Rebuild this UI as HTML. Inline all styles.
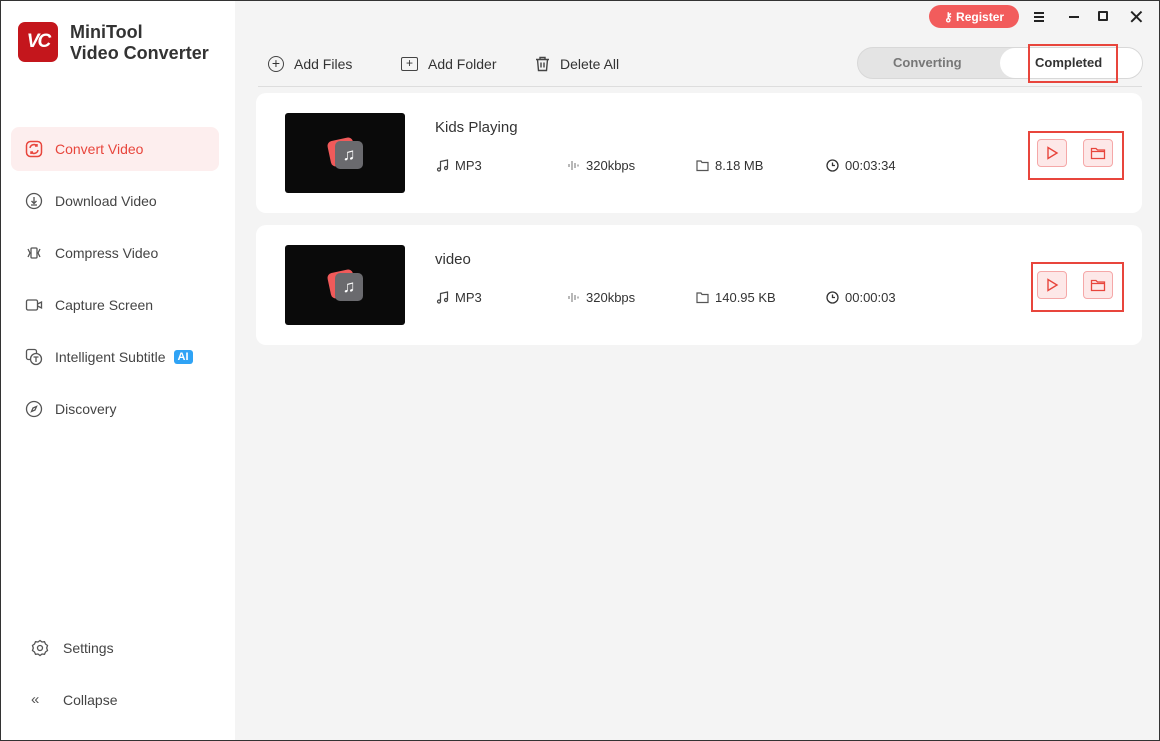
<!DOCTYPE html>
<html><head><style>
*{margin:0;padding:0;box-sizing:border-box}
body{width:1160px;height:741px;font-family:"Liberation Sans",sans-serif;background:#f4f4f4;position:relative;overflow:hidden;color:#333}
.frame{position:absolute;inset:0;border:1px solid #333;pointer-events:none;z-index:10}
.side{position:absolute;left:0;top:0;width:235px;height:741px;background:#fff}
.abs{position:absolute}
.nav{position:absolute;left:25px;font-size:14px;color:#444;display:flex;align-items:center;gap:12px}
.nav svg{width:18px;height:18px}
.card{position:absolute;left:256px;width:886px;height:120px;background:#fff;border-radius:10px}
.thumb{position:absolute;left:29px;top:20px;width:120px;height:80px;background:#0a0a0a;border-radius:3px}
.title{position:absolute;left:179px;top:26px;font-size:15px;color:#333}
.meta{position:absolute;top:65px;font-size:13px;color:#333;display:flex;align-items:center;gap:6px}
.meta svg{width:13px;height:13px}
.btn{position:absolute;width:30px;height:28px;border:1px solid #f5a8a8;background:#fde8e8;border-radius:4px;display:flex;align-items:center;justify-content:center}
.redbox{position:absolute;border:2px solid #e8453c}
.tb{position:absolute;top:56px;font-size:14px;color:#333;display:flex;align-items:center;gap:10px}
</style></head><body>
<div class="side">
  <div class="abs" style="left:18px;top:22px;width:40px;height:40px;border-radius:7px;background:#c4161c;color:#fff;font-weight:bold;font-size:19px;font-style:italic;display:flex;align-items:center;justify-content:center;letter-spacing:-2px">VC</div>
  <div class="abs" style="left:70px;top:22px;font-size:18px;font-weight:bold;line-height:21px;color:#333">MiniTool<br>Video Converter</div>
  <div class="abs" style="left:11px;top:127px;width:208px;height:44px;background:#fdeeee;border-radius:8px"></div>
  <div class="nav" style="top:140px;color:#e8453c"><svg viewBox="0 0 18 18" fill="none" stroke="#e8453c" stroke-width="1.5"><rect x="1.5" y="1.5" width="15" height="15" rx="4"/><path d="M5 8a4 4 0 0 1 7-2M13 10a4 4 0 0 1-7 2M12 4v2h-2M6 14v-2h2"/></svg>Convert Video</div>
  <div class="nav" style="top:192px"><svg viewBox="0 0 18 18" fill="none" stroke="#555" stroke-width="1.3"><circle cx="9" cy="9" r="7.5"/><path d="M9 5v6M6.5 9l2.5 2.5L11.5 9M6 13h6"/></svg>Download Video</div>
  <div class="nav" style="top:244px"><svg viewBox="0 0 18 18" fill="none" stroke="#555" stroke-width="1.3"><rect x="6" y="4" width="6" height="10" rx="1"/><path d="M3 5l2 4-2 4M15 5l-2 4 2 4"/></svg>Compress Video</div>
  <div class="nav" style="top:296px"><svg viewBox="0 0 18 18" fill="none" stroke="#555" stroke-width="1.3"><rect x="1.5" y="4" width="11" height="10" rx="1.5"/><path d="M12.5 8l4-2v6l-4-2"/></svg>Capture Screen</div>
  <div class="nav" style="top:348px"><svg viewBox="0 0 18 18" fill="none" stroke="#555" stroke-width="1.3"><rect x="1.5" y="1.5" width="10" height="10" rx="2"/><circle cx="11" cy="11" r="5.5" fill="#fff"/><path d="M8.5 9h5M11 9v5"/></svg>Intelligent Subtitle <span style="background:#2fa3f5;color:#fff;font-size:11px;font-weight:bold;padding:1px 4px;border-radius:3px;margin-left:-4px">AI</span></div>
  <div class="nav" style="top:400px"><svg viewBox="0 0 18 18" fill="none" stroke="#555" stroke-width="1.3"><circle cx="9" cy="9" r="7.5"/><path d="M11.5 6.5l-1.5 3.5-3.5 1.5 1.5-3.5z"/></svg>Discovery</div>
  <div class="nav" style="top:639px;left:31px;gap:14px"><svg viewBox="0 0 18 18" fill="none" stroke="#555" stroke-width="1.3"><circle cx="9" cy="9" r="2.5"/><path d="M9 1.5l2 1.5 2.5-.3 1 2.3 2 1.5-.8 2.5.8 2.5-2 1.5-1 2.3-2.5-.3-2 1.5-2-1.5-2.5.3-1-2.3-2-1.5.8-2.5-.8-2.5 2-1.5 1-2.3 2.5.3z"/></svg>Settings</div>
  <div class="nav" style="top:691px;left:31px;gap:14px"><span style="font-size:15px;color:#555;width:18px">«</span>Collapse</div>
</div>
<!-- title bar -->
<div class="abs" style="left:929px;top:5px;width:90px;height:23px;border-radius:12px;background:#f25c5c;color:#fff;font-size:12px;font-weight:bold;display:flex;align-items:center;justify-content:center;gap:6px">⚷ Register</div>
<div class="abs" style="left:1034px;top:12px;width:10px;height:2px;background:#222;box-shadow:0 4px 0 #222,0 8px 0 #222"></div>
<div class="abs" style="left:1069px;top:16px;width:10px;height:2px;background:#222"></div>
<div class="abs" style="left:1098px;top:11px;width:10px;height:10px;border:2px solid #222;border-radius:1px"></div>
<div class="abs" style="left:1128px;top:5px;font-size:20px;color:#222">✕</div>
<!-- toolbar -->
<div class="tb" style="left:268px"><span style="display:inline-block;width:16px;height:16px;border:1.5px solid #444;border-radius:50%;text-align:center;line-height:12px;font-size:14px">+</span>Add Files</div>
<div class="tb" style="left:401px"><span style="display:inline-block;width:17px;height:14px;border:1.5px solid #444;border-radius:2px;text-align:center;line-height:10px;font-size:12px">+</span>Add Folder</div>
<div class="tb" style="left:535px"><svg width="15" height="16" viewBox="0 0 15 16" fill="none" stroke="#444" stroke-width="1.4"><path d="M1 3.5h13M5 3.5V1.5h5v2M2.5 3.5l1 11h8l1-11M6 6.5v5M9 6.5v5"/></svg>Delete All</div>
<div class="abs" style="left:258px;top:86px;width:884px;height:1px;background:#ddd"></div>
<div class="abs" style="left:857px;top:47px;width:286px;height:32px;border-radius:16px;background:#e4e4e4;border:1px solid #d8d8d8"></div>
<div class="abs" style="left:1000px;top:48px;width:142px;height:30px;border-radius:15px;background:#fff"></div>
<div class="abs" style="left:893px;top:55px;font-size:13px;font-weight:bold;color:#777">Converting</div>
<div class="abs" style="left:1035px;top:55px;font-size:13px;font-weight:bold;color:#333">Completed</div>
<div class="redbox" style="left:1028px;top:44px;width:90px;height:39px"></div>
<!-- cards -->
<div class="card" style="top:93px">
  <div class="thumb"><div class="abs" style="left:44px;top:26px;width:26px;height:26px;background:#f05a5a;border-radius:5px;transform:rotate(-12deg)"></div><div class="abs" style="left:50px;top:28px;width:28px;height:28px;background:#6a6a6e;border-radius:5px;color:#fff;font-size:17px;text-align:center;line-height:28px">♫</div></div>
  <div class="title">Kids Playing</div>
  <div class="meta" style="left:180px"><svg viewBox="0 0 13 13" fill="none" stroke="#444" stroke-width="1.2"><path d="M4.5 10.5V2.5l7-1.5v8"/><circle cx="3" cy="10.5" r="1.5"/><circle cx="10" cy="9" r="1.5"/></svg>MP3</div>
  <div class="meta" style="left:311px"><svg viewBox="0 0 13 13" stroke="#888" stroke-width="1.2"><path d="M2 5v3M5 2v9M8 4v5M11 5.5v2"/></svg>320kbps</div>
  <div class="meta" style="left:440px"><svg viewBox="0 0 13 13" fill="none" stroke="#555" stroke-width="1.2"><path d="M1 2h4l1 1.5h6v8H1z"/></svg>8.18 MB</div>
  <div class="meta" style="left:570px"><svg viewBox="0 0 13 13" fill="none" stroke="#333" stroke-width="1.3"><circle cx="6.5" cy="6.5" r="5.5"/><path d="M6.5 3.5v3h2.5"/></svg>00:03:34</div>
  <div class="btn" style="left:781px;top:46px"><svg width="14" height="14" viewBox="0 0 14 14" fill="none" stroke="#e8453c" stroke-width="1.4"><path d="M3 1.5v11l9-5.5z"/></svg></div>
  <div class="btn" style="left:827px;top:46px"><svg width="16" height="14" viewBox="0 0 16 14" fill="none" stroke="#e8453c" stroke-width="1.3"><path d="M1.5 2.5h4.5l1.5 1.5h7v8.5h-13z M1.5 5.5h13"/></svg></div>
</div>
<div class="redbox" style="left:1028px;top:131px;width:96px;height:49px"></div>
<div class="card" style="top:225px">
  <div class="thumb"><div class="abs" style="left:44px;top:26px;width:26px;height:26px;background:#f05a5a;border-radius:5px;transform:rotate(-12deg)"></div><div class="abs" style="left:50px;top:28px;width:28px;height:28px;background:#6a6a6e;border-radius:5px;color:#fff;font-size:17px;text-align:center;line-height:28px">♫</div></div>
  <div class="title">video</div>
  <div class="meta" style="left:180px"><svg viewBox="0 0 13 13" fill="none" stroke="#444" stroke-width="1.2"><path d="M4.5 10.5V2.5l7-1.5v8"/><circle cx="3" cy="10.5" r="1.5"/><circle cx="10" cy="9" r="1.5"/></svg>MP3</div>
  <div class="meta" style="left:311px"><svg viewBox="0 0 13 13" stroke="#888" stroke-width="1.2"><path d="M2 5v3M5 2v9M8 4v5M11 5.5v2"/></svg>320kbps</div>
  <div class="meta" style="left:440px"><svg viewBox="0 0 13 13" fill="none" stroke="#555" stroke-width="1.2"><path d="M1 2h4l1 1.5h6v8H1z"/></svg>140.95 KB</div>
  <div class="meta" style="left:570px"><svg viewBox="0 0 13 13" fill="none" stroke="#333" stroke-width="1.3"><circle cx="6.5" cy="6.5" r="5.5"/><path d="M6.5 3.5v3h2.5"/></svg>00:00:03</div>
  <div class="btn" style="left:781px;top:46px"><svg width="14" height="14" viewBox="0 0 14 14" fill="none" stroke="#e8453c" stroke-width="1.4"><path d="M3 1.5v11l9-5.5z"/></svg></div>
  <div class="btn" style="left:827px;top:46px"><svg width="16" height="14" viewBox="0 0 16 14" fill="none" stroke="#e8453c" stroke-width="1.3"><path d="M1.5 2.5h4.5l1.5 1.5h7v8.5h-13z M1.5 5.5h13"/></svg></div>
</div>
<div class="redbox" style="left:1031px;top:262px;width:93px;height:50px"></div>
<div class="frame"></div>
</body></html>
